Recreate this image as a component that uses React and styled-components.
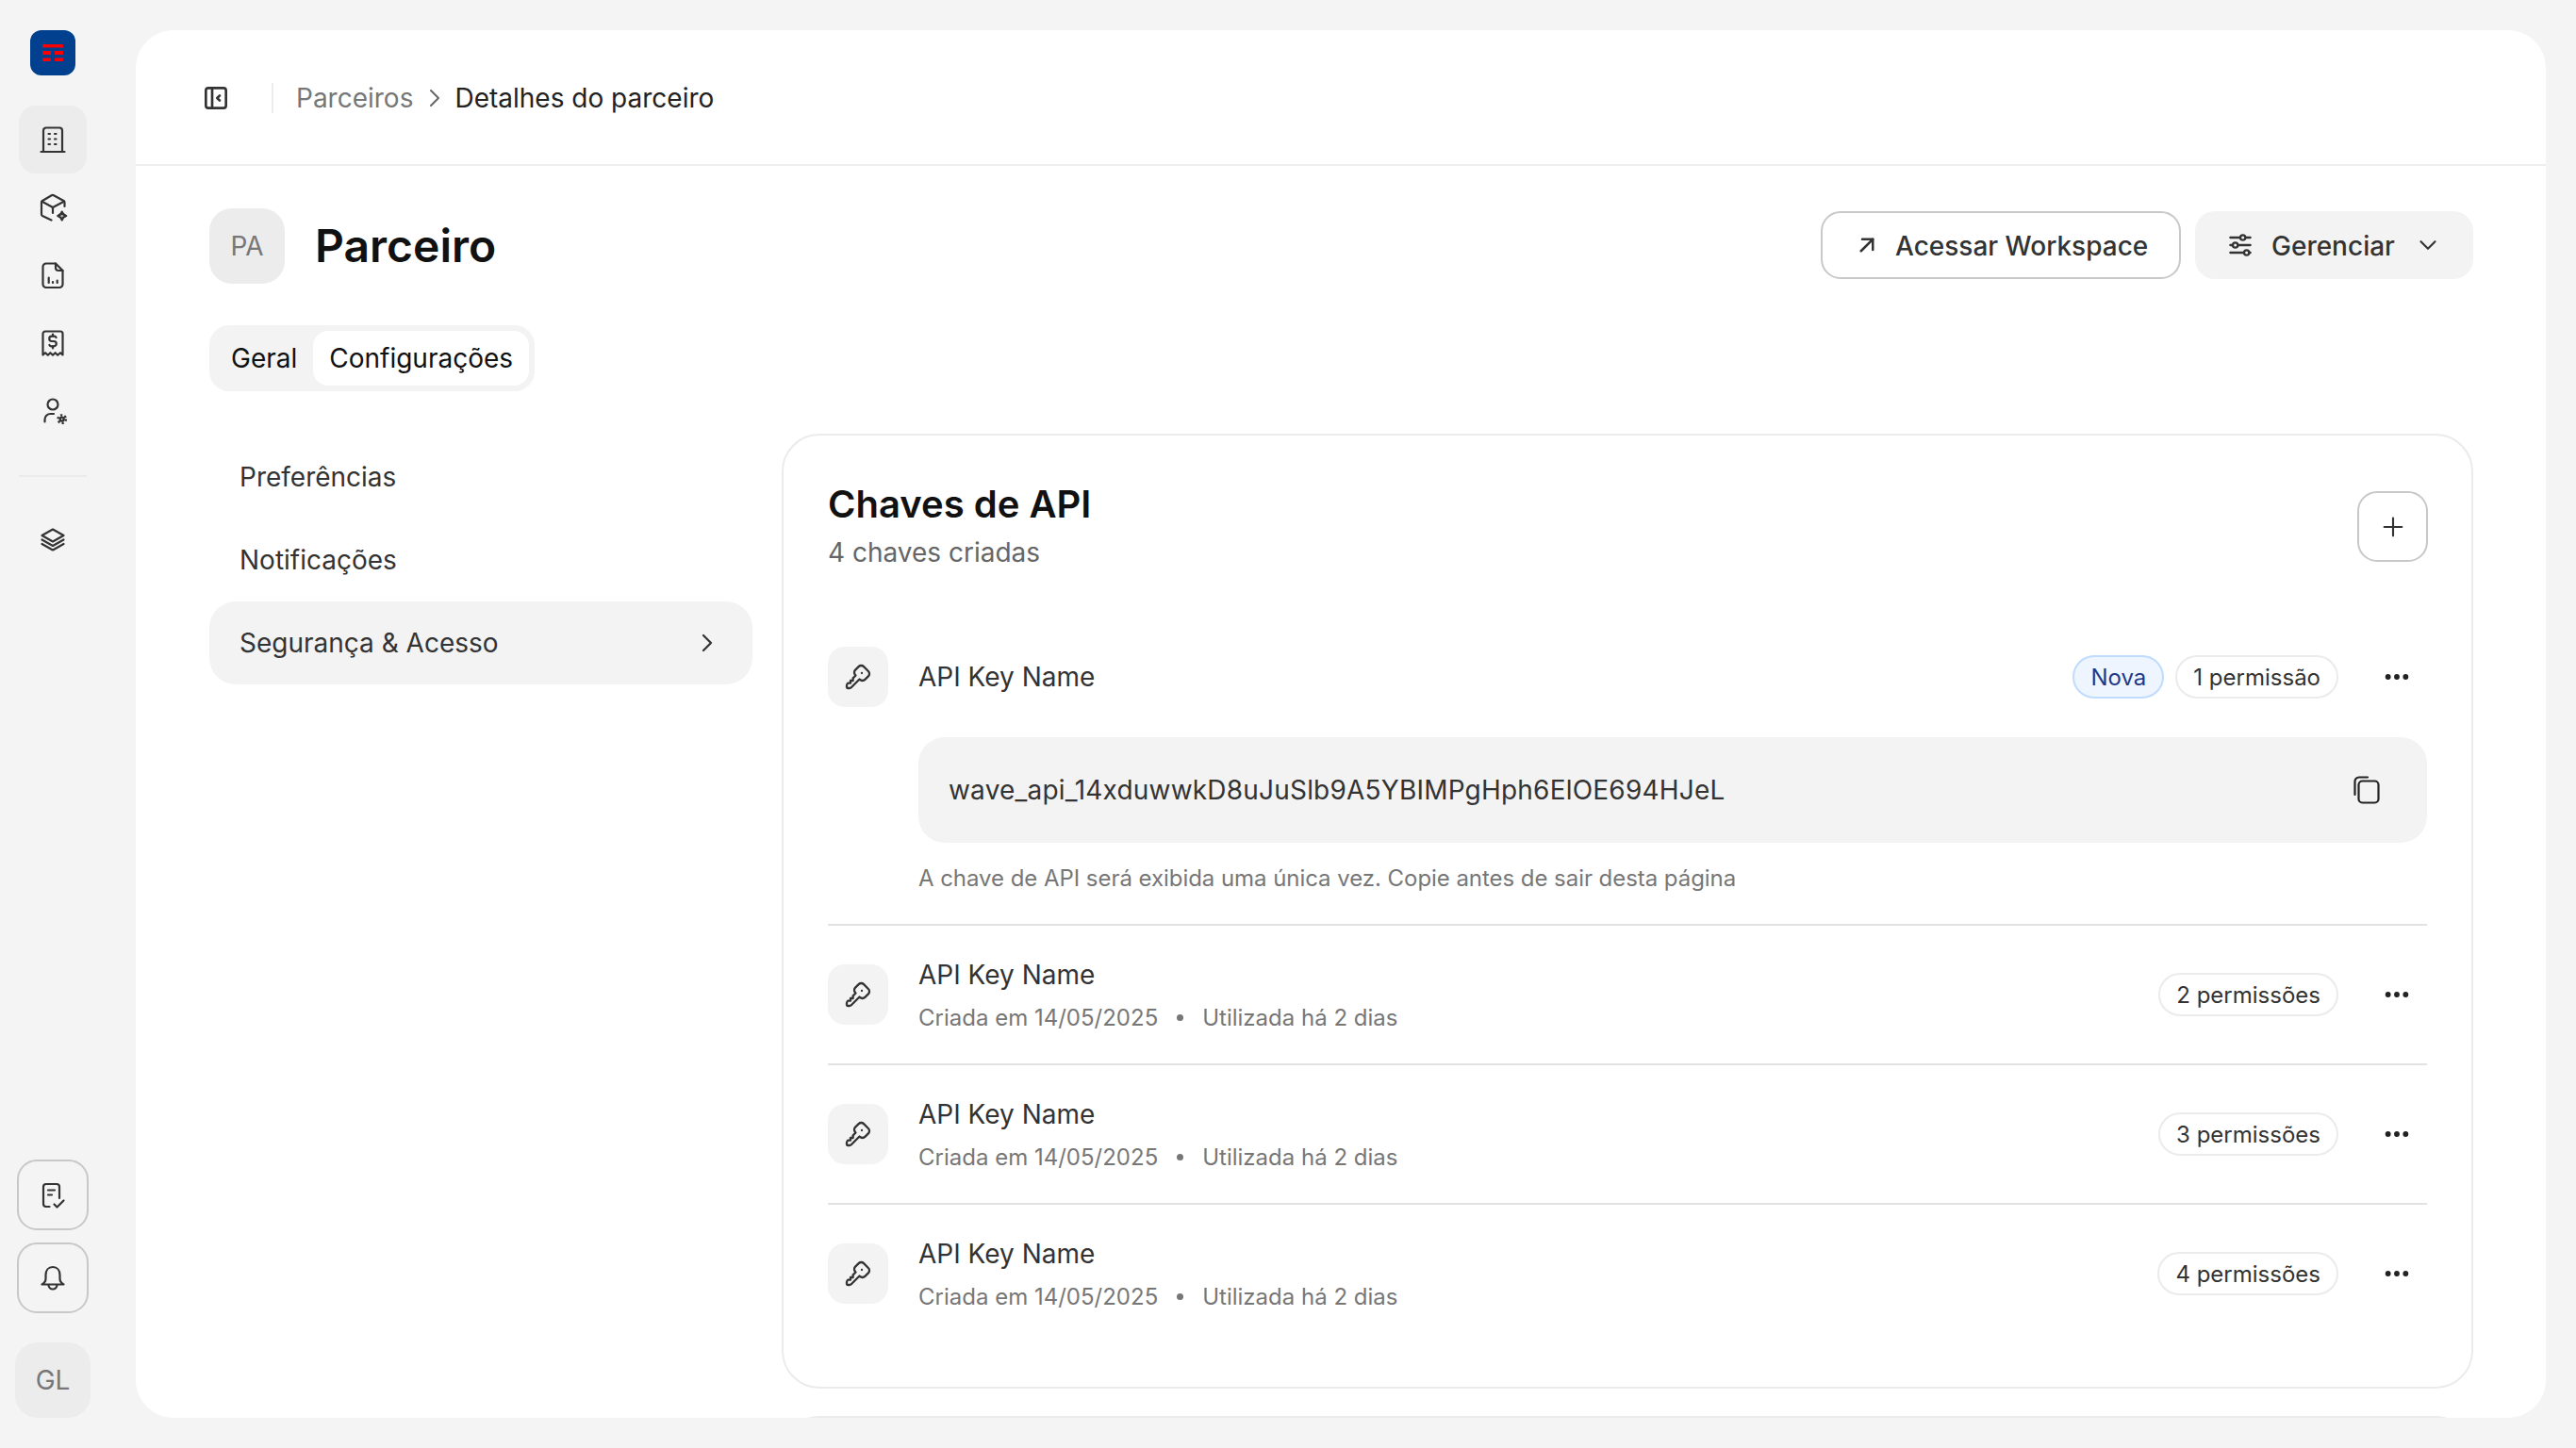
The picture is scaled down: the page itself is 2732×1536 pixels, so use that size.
import React from 'react';
import styled, { createGlobalStyle } from 'styled-components';
import {
  TbAdjustmentsHorizontal,
  TbArrowUpRight,
  TbChevronDown,
  TbChevronRight,
  TbDots,
  TbKey,
  TbLayoutSidebarLeftCollapse,
  TbPlus,
} from 'react-icons/tb';

const GlobalStyle = createGlobalStyle`
  html, body { margin: 0; padding: 0; height: 100%; }
  body {
    font-family: Inter, "Liberation Sans", sans-serif;
    background: #f4f4f4;
    color: #333;
  }
  * { box-sizing: border-box; }
`;

const SideIcon = ({ children }) => (
  <svg width="32" height="32" viewBox="0 0 32 32" fill="none" stroke="#333" strokeWidth="2.2" strokeLinecap="round" strokeLinejoin="round">
    {children}
  </svg>
);

const BuildingIcon = () => (
  <SideIcon>
    <path d="M3.500 29h25" />
    <path d="M6 29V6.500a3 3 0 0 1 3-3h14a3 3 0 0 1 3 3V29" />
    <path d="M11.500 10h1.500M18 10h1.500M11.500 15.500h1.500M18 15.500h1.500M11.500 21h1.500M18 21h1.500" />
  </SideIcon>
);

const CubeIcon = () => (
  <SideIcon>
    <path d="M28.500 15v-4.300a2 2 0 0 0-1-1.700L17 3.200a2.400 2.400 0 0 0-2.300 0L5 9a2 2 0 0 0-1 1.700v12.600a2 2 0 0 0 1 1.700l9.500 4.500" />
    <path d="M4.600 9.700L16 16l11.800-6.300" />
    <path d="M16 16v6" />
    <path d="M25.700 20.500c.5 2.400 1.500 3.500 4.500 4.500-3 1-4 2.100-4.500 4.500-.5-2.400-1.500-3.500-4.500-4.500 3-1 4-2.100 4.500-4.500z" fill="#333" fillOpacity="0.35" />
  </SideIcon>
);

const FileChartIcon = () => (
  <SideIcon>
    <path d="M19 3.500H9A3.500 3.500 0 0 0 5.500 7v18.500A3.500 3.500 0 0 0 9 29h14a3.500 3.500 0 0 0 3.500-3.500V11z" />
    <path d="M19 3.500V8a3 3 0 0 0 3 3h4.500" />
    <path d="M11.700 24v-5.500M16 24v-1M20.700 24v-2.500" />
  </SideIcon>
);

const ReceiptIcon = () => (
  <SideIcon>
    <path d="M5.500 28.500V6a2.500 2.500 0 0 1 2.500-2.500h16A2.500 2.500 0 0 1 26.500 6v22.500l-2.500-2.300-2.800 2.500-2.600-2.500-2.600 2.500-2.600-2.500-2.600 2.500-2.700-2.500z" />
    <path d="M19.600 10a2.400 2.400 0 0 0-2.300-1.300h-2.400a2.400 2.400 0 0 0 0 5.300h2.200a2.400 2.400 0 0 1 0 5.300h-2.400a2.400 2.400 0 0 1-2.300-1.300" />
    <path d="M16 6.500v2.200M16 19.300v2.200" />
  </SideIcon>
);

const UserCogIcon = () => (
  <SideIcon>
    <circle cx="16" cy="9" r="5.500" />
    <path d="M7.500 27.500V25a6 6 0 0 1 6-6h3.500" />
    <circle cx="25.700" cy="24.600" r="2" strokeWidth="2.400" />
    <circle cx="25.700" cy="24.600" r="4.200" strokeWidth="2.400" strokeLinecap="butt" strokeDasharray="2.200 2.200" />
  </SideIcon>
);

const LayersIcon = () => (
  <SideIcon>
    <path d="M16 5.500L27.500 12 16 18.500 4.500 12z" />
    <path d="M4.500 16.500L16 23l11.500-6.500" />
    <path d="M4.500 21L16 27.500 27.500 21" />
  </SideIcon>
);

const TasksIcon = () => (
  <SideIcon>
    <path d="M12.500 28H9a3 3 0 0 1-3-3V7a3 3 0 0 1 3-3h11a3 3 0 0 1 3 3v12" />
    <path d="M11 10.500h7M11 15.500h4" />
    <path d="M17.500 25.500l3 3 7-7" />
  </SideIcon>
);

const BellIcon = () => (
  <SideIcon>
    <path d="M16 4c-4.600 0-7.500 3.600-7.500 8.500v4c0 2.500-1.500 4.500-4 6h23c-2.500-1.500-4-3.500-4-6v-4C23.500 7.600 20.600 4 16 4z" />
    <path d="M11.500 23a4.500 4.500 0 0 0 9 0" />
  </SideIcon>
);

const CopyIcon = () => (
  <svg width="32" height="32" viewBox="0 0 32 32" fill="none" stroke="#222" strokeWidth="2.200" strokeLinecap="round" strokeLinejoin="round">
    <rect x="7.500" y="6.500" width="21" height="23" rx="4" />
    <path d="M3.500 21V7a4.500 4.500 0 0 1 4.500-4.500h9" />
  </svg>
);

const Logo = () => (
  <LogoBox>
    <svg width="22" height="18" viewBox="0 0 22 18" fill="#fa0000">
      <rect x="0" y="0" width="22" height="3.500" />
      <rect x="0" y="7" width="9" height="4" />
      <rect x="13" y="7" width="9" height="4" />
      <rect x="0" y="14.500" width="9" height="3.500" />
      <rect x="13" y="14.500" width="9" height="3.500" />
    </svg>
  </LogoBox>
);

const navIcons = [BuildingIcon, CubeIcon, FileChartIcon, ReceiptIcon, UserCogIcon];
const settingsNav = ['Preferências', 'Notificações', 'Segurança & Acesso'];
const apiKeys = ['2 permissões', '3 permissões', '4 permissões'];

export default function App() {
  return (
    <Page>
      <GlobalStyle />
      <Sidebar>
        <Logo />
        <SideNav>
          {navIcons.map((Icon, i) => (
            <SideItem key={i} $active={i === 0}>
              <Icon />
            </SideItem>
          ))}
        </SideNav>
        <SideDivider />
        <SideItem>
          <LayersIcon />
        </SideItem>
        <SideBottom>
          <SideButton>
            <TasksIcon />
          </SideButton>
          <SideButton>
            <BellIcon />
          </SideButton>
          <UserAvatar>GL</UserAvatar>
        </SideBottom>
      </Sidebar>

      <Main>
        <TopBar>
          <ToggleButton>
            <TbLayoutSidebarLeftCollapse />
          </ToggleButton>
          <TopDivider />
          <Crumb>Parceiros</Crumb>
          <CrumbArrow>
            <TbChevronRight />
          </CrumbArrow>
          <Crumb $current>Detalhes do parceiro</Crumb>
        </TopBar>

        <Content>
          <PageHead>
            <PartnerAvatar>PA</PartnerAvatar>
            <PageTitle>Parceiro</PageTitle>
            <HeadActions>
              <OutlineButton>
                <TbArrowUpRight />
                Acessar Workspace
              </OutlineButton>
              <GreyButton>
                <TbAdjustmentsHorizontal />
                Gerenciar
                <TbChevronDown />
              </GreyButton>
            </HeadActions>
          </PageHead>

          <Tabs>
            <Tab>Geral</Tab>
            <Tab $active>Configurações</Tab>
          </Tabs>

          <Columns>
            <SettingsNav>
              {settingsNav.map((label, i) => (
                <SettingsItem key={label} $active={i === 2}>
                  {label}
                  {i === 2 && <TbChevronRight />}
                </SettingsItem>
              ))}
            </SettingsNav>

            <CardStack>
              <Card>
                <CardHead>
                  <div>
                    <CardTitle>Chaves de API</CardTitle>
                    <CardSub>4 chaves criadas</CardSub>
                  </div>
                  <PlusButton>
                    <TbPlus />
                  </PlusButton>
                </CardHead>

                <NewKey>
                  <NewKeyHead>
                    <KeyIconBox>
                      <TbKey />
                    </KeyIconBox>
                    <KeyName>API Key Name</KeyName>
                    <Badge $tone="blue">Nova</Badge>
                    <Badge>1 permissão</Badge>
                    <DotsButton>
                      <TbDots />
                    </DotsButton>
                  </NewKeyHead>
                  <SecretBox>
                    wave_api_14xduwwkD8uJuSlb9A5YBIMPgHph6ElOE694HJeL
                    <CopyIcon />
                  </SecretBox>
                  <SecretHint>A chave de API será exibida uma única vez. Copie antes de sair desta página</SecretHint>
                </NewKey>

                {apiKeys.map((perm) => (
                  <KeyRow key={perm}>
                    <KeyIconBox>
                      <TbKey />
                    </KeyIconBox>
                    <KeyInfo>
                      <KeyName>API Key Name</KeyName>
                      <KeyMeta>
                        Criada em 14/05/2025
                        <MetaDot />
                        Utilizada há 2 dias
                      </KeyMeta>
                    </KeyInfo>
                    <Badge>{perm}</Badge>
                    <DotsButton>
                      <TbDots />
                    </DotsButton>
                  </KeyRow>
                ))}
              </Card>
              <NextCard />
            </CardStack>
          </Columns>
        </Content>
      </Main>
    </Page>
  );
}

const Page = styled.div`
  display: flex;
  width: 2732px;
  height: 1536px;
  overflow: hidden;
  background: #f4f4f4;
`;

const Sidebar = styled.aside`
  width: 144px;
  flex-shrink: 0;
  display: flex;
  flex-direction: column;
  align-items: center;
  padding: 32px 32px 32px 0;
`;

const LogoBox = styled.div`
  width: 48px;
  height: 48px;
  border-radius: 12px;
  background: #00408f;
  display: flex;
  align-items: center;
  justify-content: center;
  margin-bottom: 32px;
`;

const SideNav = styled.nav`
  display: flex;
  flex-direction: column;
`;

const SideItem = styled.div`
  width: 72px;
  height: 72px;
  flex-shrink: 0;
  border-radius: 18px;
  display: flex;
  align-items: center;
  justify-content: center;
  background: ${(p) => (p.$active ? '#ececec' : 'transparent')};
`;

const SideDivider = styled.div`
  width: 72px;
  height: 2px;
  flex-shrink: 0;
  background: #ebebeb;
  margin: 32px 0 30px;
`;

const SideBottom = styled.div`
  margin-top: auto;
  display: flex;
  flex-direction: column;
  align-items: center;
`;

const SideButton = styled.div`
  width: 76px;
  height: 75px;
  border: 2px solid #c8c8c8;
  border-radius: 21px;
  display: flex;
  align-items: center;
  justify-content: center;
  margin-bottom: 13px;
`;

const UserAvatar = styled.div`
  width: 80px;
  height: 80px;
  margin-top: 18px;
  border-radius: 24px;
  background: #ececec;
  color: #777;
  font-size: 28px;
  display: flex;
  align-items: center;
  justify-content: center;
`;

const Main = styled.main`
  width: 2556px;
  height: 1472px;
  margin-top: 32px;
  background: #fff;
  border-radius: 40px;
  overflow: hidden;
  display: flex;
  flex-direction: column;
`;

const TopBar = styled.header`
  height: 144px;
  flex-shrink: 0;
  display: flex;
  align-items: center;
  padding: 2px 0 0 69px;
  border-bottom: 2px solid #eeeeee;
`;

const ToggleButton = styled.div`
  width: 32px;
  height: 32px;
  color: #333;
  svg { width: 32px; height: 32px; display: block; }
`;

const TopDivider = styled.div`
  width: 2px;
  height: 32px;
  background: #ececec;
  margin: 0 24px 0 43px;
`;

const Crumb = styled.span`
  font-size: 28px;
  color: ${(p) => (p.$current ? '#222' : '#777')};
`;

const CrumbArrow = styled.span`
  display: flex;
  color: #666;
  margin: 0 5px 0 7px;
  svg { width: 32px; height: 32px; stroke-width: 1.5; }
`;

const Content = styled.div`
  flex: 1;
  min-height: 0;
  overflow: hidden;
  padding: 45px 77px 0 78px;
`;

const PageHead = styled.div`
  display: flex;
  align-items: center;
`;

const PartnerAvatar = styled.div`
  width: 80px;
  height: 80px;
  border-radius: 24px;
  background: #ececec;
  color: #777;
  font-size: 28px;
  display: flex;
  align-items: center;
  justify-content: center;
`;

const PageTitle = styled.h1`
  margin: 0 0 0 32px;
  font-size: 48px;
  line-height: 60px;
  font-weight: 600;
  color: #111;
`;

const HeadActions = styled.div`
  margin-left: auto;
  display: flex;
  gap: 15px;
  margin-top: -2px;
`;

const OutlineButton = styled.button`
  height: 72px;
  width: 382px;
  padding: 2px 0 0 32px;
  border: 2px solid #c8c8c8;
  border-radius: 21px;
  background: #fff;
  color: #333;
  font: 500 28px Inter, sans-serif;
  display: flex;
  align-items: center;
  gap: 15px;
  svg { width: 30px; height: 30px; flex-shrink: 0; margin-top: -2px; }
`;

const GreyButton = styled.button`
  height: 72px;
  width: 295px;
  padding: 2px 0 0 32px;
  border: 0;
  border-radius: 21px;
  background: #f3f3f3;
  color: #333;
  font: 500 28px Inter, sans-serif;
  display: flex;
  align-items: center;
  gap: 17px;
  svg { width: 32px; height: 32px; flex-shrink: 0; stroke-width: 1.7; margin-top: -2px; }
  svg:last-child { width: 30px; height: 30px; margin-left: 3px; }
`;

const Tabs = styled.div`
  display: inline-flex;
  margin-top: 44px;
  padding: 6px;
  height: 70px;
  border-radius: 21px;
  background: #f3f3f3;
  vertical-align: top;
`;

const Tab = styled.div`
  height: 58px;
  padding: 0 17px;
  border-radius: 16px;
  font-size: 28px;
  color: #111;
  display: flex;
  align-items: center;
  background: ${(p) => (p.$active ? '#fff' : 'transparent')};
`;

const Columns = styled.div`
  display: grid;
  grid-template-columns: 576px 1fr;
  column-gap: 31px;
  margin-top: 45px;
`;

const SettingsNav = styled.nav`
  display: flex;
  flex-direction: column;
  padding-top: 2px;
`;

const SettingsItem = styled.div`
  height: 88px;
  padding: 0 32px;
  border-radius: 28px;
  font-size: 28px;
  color: #333;
  display: flex;
  align-items: center;
  justify-content: space-between;
  background: ${(p) => (p.$active ? '#f3f3f3' : 'transparent')};
  svg { width: 32px; height: 32px; stroke-width: 1.7; }
`;

const CardStack = styled.div`
  display: flex;
  flex-direction: column;
  gap: 29px;
`;

const Card = styled.section`
  border: 2px solid #ebebeb;
  border-radius: 40px;
  padding: 46px 47px 47px;
`;

const NextCard = styled.div`
  height: 120px;
  border: 2px solid #ebebeb;
  border-radius: 40px;
`;

const CardHead = styled.div`
  display: flex;
  align-items: center;
  justify-content: space-between;
  margin-bottom: 77px;
`;

const CardTitle = styled.h2`
  margin: 2px 0 0;
  font-size: 40px;
  line-height: 50px;
  font-weight: 600;
  color: #111;
`;

const CardSub = styled.div`
  margin-top: 3px;
  font-size: 28px;
  line-height: 46px;
  color: #666;
`;

const PlusButton = styled.div`
  width: 75px;
  height: 75px;
  margin-right: -1px;
  border: 2px solid #c8c8c8;
  border-radius: 21px;
  display: flex;
  align-items: center;
  justify-content: center;
  color: #333;
  svg { width: 32px; height: 32px; stroke-width: 1.6; }
`;

const NewKey = styled.div`
  padding-bottom: 31px;
  border-bottom: 2px solid #e2e2e2;
`;

const NewKeyHead = styled.div`
  display: flex;
  align-items: center;
  gap: 12px;
`;

const KeyIconBox = styled.div`
  width: 64px;
  height: 64px;
  border-radius: 18px;
  background: #f3f3f3;
  display: flex;
  align-items: center;
  justify-content: center;
  flex-shrink: 0;
  margin-right: 20px;
  color: #333;
  svg { width: 32px; height: 32px; stroke-width: 1.7; }
`;

const KeyName = styled.div`
  flex: 1;
  font-size: 28px;
  line-height: 42px;
  color: #333;
`;

const Badge = styled.span`
  height: 46px;
  padding: 0 17px;
  border-radius: 23px;
  font-size: 24px;
  display: flex;
  align-items: center;
  border: 2px solid ${(p) => (p.$tone === 'blue' ? '#bfdbfe' : '#ebebeb')};
  background: ${(p) => (p.$tone === 'blue' ? '#eef5ff' : '#fff')};
  color: ${(p) => (p.$tone === 'blue' ? '#1e3a8a' : '#333')};
`;

const DotsButton = styled.div`
  width: 64px;
  height: 46px;
  margin-left: 18px;
  display: flex;
  align-items: center;
  justify-content: center;
  color: #222;
  svg { width: 32px; height: 32px; stroke-width: 2.4; }
`;

const SecretBox = styled.div`
  height: 112px;
  margin: 32px 0 0 96px;
  padding: 0 48px 0 32px;
  border-radius: 28px;
  background: #f3f3f3;
  font-size: 28px;
  letter-spacing: 0.2px;
  color: #333;
  display: flex;
  align-items: center;
  justify-content: space-between;
`;

const SecretHint = styled.div`
  margin: 21px 0 0 96px;
  font-size: 24px;
  line-height: 34px;
  letter-spacing: -0.05px;
  color: #777;
`;

const KeyRow = styled.div`
  height: 148px;
  display: flex;
  align-items: center;
  gap: 12px;
  border-bottom: 2px solid #e2e2e2;
  &:last-child { height: 146px; border-bottom: 0; }
`;

const KeyInfo = styled.div`
  flex: 1;
  padding-top: 2px;
`;

const KeyMeta = styled.div`
  margin-top: 5px;
  font-size: 24px;
  line-height: 40px;
  color: #777;
  display: flex;
  align-items: center;
`;

const MetaDot = styled.span`
  width: 7px;
  height: 7px;
  margin: 0 20px;
  border-radius: 50%;
  background: #777;
`;
